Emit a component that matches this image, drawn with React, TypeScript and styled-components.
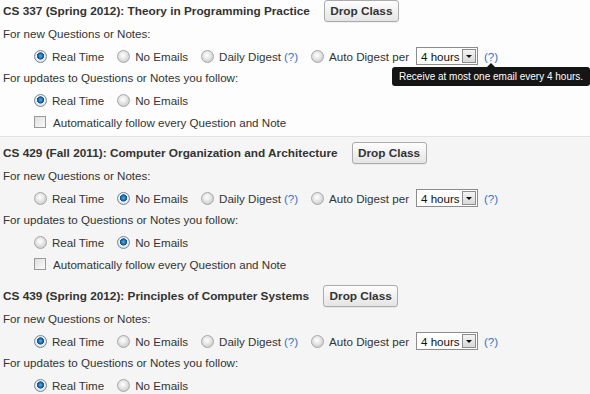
import React, { FunctionComponent } from 'react';
import styled, { createGlobalStyle } from 'styled-components';

const GlobalStyle = createGlobalStyle`
  body {
    margin: 0;
    background: #f5f5f5;
    font-family: 'Liberation Sans', Arial, sans-serif;
    color: #333;
    overflow: hidden;
  }
`;

const colors = {
  text: '#333333',
  link: '#2f74c8',
  line: '#e3e3e3',
};

const Section = styled('div')<{ $active?: boolean }>`
  background: ${(p) => (p.$active ? '#fdfdfd' : '#f5f5f5')};
  border-bottom: ${(p) => (p.$active ? `1px solid ${colors.line}` : 'none')};
  padding: ${(p) => (p.$active ? '0 3px 3px' : '5px 3px 5px')};
`;

const Header = styled('div')`
  display: flex;
  align-items: center;
  height: 22px;
  margin-bottom: 1px;
`;

const Title = styled('div')`
  font-weight: bold;
  font-size: 11.8px;
  color: ${colors.text};
  margin-right: 14px;
`;

const DropButton = styled('button')`
  height: 22px;
  width: 75px;
  padding: 0;
  border: 1px solid #ababab;
  border-radius: 3px;
  background: linear-gradient(#fefefe, #e4e4e4);
  font-family: inherit;
  font-weight: bold;
  font-size: 11.8px;
  color: ${colors.text};
  box-shadow: 0 1px 0 rgba(0, 0, 0, 0.05);
`;

const Label = styled('div')`
  height: 22px;
  line-height: 22px;
  font-size: 11.6px;
`;

const OptionRow = styled('div')`
  display: flex;
  align-items: center;
  height: 22px;
  padding-left: 31px;
  font-size: 11.6px;
`;

const Option = styled('label')`
  display: flex;
  align-items: center;
  margin-right: 13px;
  white-space: nowrap;
`;

const Radio = styled('span')<{ $checked?: boolean }>`
  box-sizing: border-box;
  width: 13px;
  height: 13px;
  border-radius: 50%;
  border: 1px solid ${(p) => (p.$checked ? '#6f8aa3' : '#a7a7a7')};
  margin-right: 5px;
  background: ${(p) =>
    p.$checked
      ? 'radial-gradient(circle at 50% 45%, #5ab0ef 0, #1d6fb3 2.2px, #0c4f86 3.3px, #f4f4f4 3.9px, #dcdcdc 6px)'
      : 'radial-gradient(circle at 45% 40%, #ffffff 0, #ececec 3px, #d3d3d3 6px)'};
`;

const Checkbox = styled('span')`
  box-sizing: border-box;
  width: 12px;
  height: 12px;
  border: 1px solid #9a9a9a;
  margin-right: 7px;
  background: linear-gradient(135deg, #dedede, #fbfbfb);
`;

const Help = styled('span')`
  color: ${colors.link};
  margin-left: 3px;
`;

const HelpAnchor = styled('span')`
  position: relative;
  color: ${colors.link};
  margin-left: 6px;
`;

const Tooltip = styled('div')`
  position: absolute;
  top: 17px;
  left: 50%;
  transform: translateX(-50%);
  background: #151515;
  color: #fff;
  font-size: 10px;
  line-height: 19px;
  height: 19px;
  padding: 0 7px;
  border-radius: 3px;
  white-space: nowrap;
  z-index: 2;
  &::before {
    content: '';
    position: absolute;
    top: -4px;
    left: 50%;
    margin-left: -5px;
    border-left: 5px solid transparent;
    border-right: 5px solid transparent;
    border-bottom: 5px solid #151515;
  }
`;

const Select = styled('div')`
  display: flex;
  align-items: center;
  box-sizing: border-box;
  height: 18px;
  width: 62px;
  margin-left: 7px;
  border: 1px solid #8c8c8c;
  background: #fff;
  color: #111;
  font-size: 11.6px;
`;

const SelectValue = styled('span')`
  flex: 1;
  padding-left: 4px;
`;

const SelectArrow = styled('span')`
  box-sizing: border-box;
  display: flex;
  align-items: center;
  justify-content: center;
  width: 14px;
  height: 14px;
  margin-right: 1px;
  border: 1px solid #8c8c8c;
  background: linear-gradient(#f4f4f4, #d8d8d8);
  &::after {
    content: '';
    border-left: 3px solid transparent;
    border-right: 3px solid transparent;
    border-top: 3px solid #111;
  }
`;

type Mode = 'real' | 'none' | 'daily' | 'auto';

interface ICourse {
  name: string;
  newMode: Mode;
  followMode: Mode;
  autoFollow: boolean;
  tooltip?: boolean;
  active?: boolean;
}

const courses: ICourse[] = [
  {
    name: 'CS 337 (Spring 2012): Theory in Programming Practice',
    newMode: 'real',
    followMode: 'real',
    autoFollow: false,
    tooltip: true,
    active: true,
  },
  {
    name: 'CS 429 (Fall 2011): Computer Organization and Architecture',
    newMode: 'none',
    followMode: 'none',
    autoFollow: false,
  },
  {
    name: 'CS 439 (Spring 2012): Principles of Computer Systems',
    newMode: 'real',
    followMode: 'real',
    autoFollow: false,
  },
];

const Course: FunctionComponent<{ course: ICourse }> = ({ course }) => (
  <Section $active={course.active}>
    <Header>
      <Title>{course.name}</Title>
      <DropButton>Drop Class</DropButton>
    </Header>
    <Label>For new Questions or Notes:</Label>
    <OptionRow>
      <Option>
        <Radio $checked={course.newMode === 'real'} />
        Real Time
      </Option>
      <Option>
        <Radio $checked={course.newMode === 'none'} />
        No Emails
      </Option>
      <Option>
        <Radio $checked={course.newMode === 'daily'} />
        Daily Digest<Help>(?)</Help>
      </Option>
      <Option>
        <Radio $checked={course.newMode === 'auto'} />
        Auto Digest per
        <Select>
          <SelectValue>4 hours</SelectValue>
          <SelectArrow />
        </Select>
        <HelpAnchor>
          (?)
          {course.tooltip && <Tooltip>Receive at most one email every 4 hours.</Tooltip>}
        </HelpAnchor>
      </Option>
    </OptionRow>
    <Label>For updates to Questions or Notes you follow:</Label>
    <OptionRow>
      <Option>
        <Radio $checked={course.followMode === 'real'} />
        Real Time
      </Option>
      <Option>
        <Radio $checked={course.followMode === 'none'} />
        No Emails
      </Option>
    </OptionRow>
    <OptionRow>
      <Option>
        <Checkbox />
        Automatically follow every Question and Note
      </Option>
    </OptionRow>
  </Section>
);

const App: FunctionComponent = () => (
  <>
    <GlobalStyle />
    {courses.map((c) => (
      <Course key={c.name} course={c} />
    ))}
  </>
);

export default App;
